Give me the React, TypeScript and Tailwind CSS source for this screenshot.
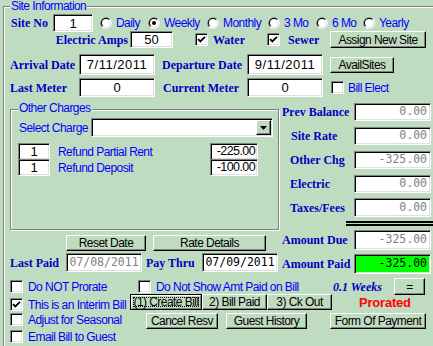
import React from "react";

const SANS = "font-['Liberation_Sans',Arial,sans-serif]";
const SERIF = "font-['Liberation_Serif','Times_New_Roman',serif]";
const MONO = "font-['DejaVu_Sans_Mono',monospace]";
const sunken =
  "border border-t-[#808080] border-l-[#808080] border-r-white border-b-white shadow-[inset_1px_1px_0_#000,inset_-1px_-1px_0_#dfdfdf] bg-white";
const raised =
  "border border-t-white border-l-white border-r-black border-b-black shadow-[inset_-1px_-1px_0_#808080] bg-[#C0DCC0]";

type P = { children?: React.ReactNode; className?: string };

function BL({ children, className = "" }: P) {
  return (
    <span
      className={`${SERIF} font-bold text-[12px] tracking-normal text-[#0000C0] leading-none whitespace-nowrap ${className}`}
    >
      {children}
    </span>
  );
}

function Field({ children, className = "" }: P) {
  return (
    <div className={`${sunken} shrink-0 flex items-center leading-none whitespace-nowrap ${className}`}>
      {children}
    </div>
  );
}

function Btn({ children, className = "" }: P) {
  return (
    <div
      className={`${raised} shrink-0 flex items-center justify-center text-black leading-none whitespace-nowrap ${className}`}
    >
      {children}
    </div>
  );
}

function Radio({ checked }: { checked?: boolean }) {
  return (
    <svg width="12" height="12" viewBox="0 0 12 12" className="shrink-0 block">
      <path d="M1.76 10.24A6 6 0 0 1 10.24 1.76Z" fill="#808080" />
      <path d="M10.24 1.76A6 6 0 0 1 1.76 10.24Z" fill="#ffffff" />
      <path d="M2.46 9.54A5 5 0 0 1 9.54 2.46Z" fill="#000000" />
      <path d="M9.54 2.46A5 5 0 0 1 2.46 9.54Z" fill="#dfdfdf" />
      <circle cx="6" cy="6" r="4" fill="#ffffff" />
      {checked && <circle cx="6" cy="6" r="2" fill="#000000" />}
    </svg>
  );
}

function Check({ checked }: { checked?: boolean }) {
  return (
    <div className={`${sunken} w-[13px] h-[13px] shrink-0 flex items-center justify-center`}>
      {checked && (
        <svg width="9" height="9" viewBox="0 0 9 9" className="block">
          <path d="M1 4.2L3.3 6.5L8 1.8" fill="none" stroke="#000" strokeWidth="1.8" />
        </svg>
      )}
    </div>
  );
}

function RadioItem({ label, checked, className = "" }: { label: string; checked?: boolean; className?: string }) {
  return (
    <div className={`flex items-center gap-[4px] shrink-0 ${className}`}>
      <Radio checked={checked} />
      <span className="leading-none whitespace-nowrap">{label}</span>
    </div>
  );
}

function CbRow({ label, checked, className = "" }: { label: string; checked?: boolean; className?: string }) {
  return (
    <div className={`flex items-center h-[13px] ml-[5px] ${className}`}>
      <Check checked={checked} />
      <span className="ml-[5px] leading-none whitespace-nowrap">{label}</span>
    </div>
  );
}

const numBox = `w-[77px] justify-end pr-[3px] ${MONO} text-[11.5px] tracking-normal`;

export default function App() {
  return (
    <div
      className={`w-[433px] h-[346px] overflow-hidden bg-[#C0DCC0] ${SANS} text-[12px] tracking-[-0.55px] text-[#0000FF]`}
    >
      <div className="relative ml-[3px] mt-[6px] h-[400px] border-l border-t border-[#808080] shadow-[inset_1px_1px_0_#fff] pl-[1px] pt-[1px]">
        <span className="absolute left-[6px] top-[-7px] px-[1px] bg-[#C0DCC0] leading-[12px] whitespace-nowrap">
          Site Information
        </span>

        {/* Row 1 */}
        <div className="mt-[6px] h-[18px] flex items-center">
          <div className="ml-[6px] w-[42px] shrink-0">
            <BL>Site No</BL>
          </div>
          <Field className="w-[40px] h-[18px] justify-center text-[13px] tracking-normal text-black">1</Field>
          <div className="ml-[7px] flex items-center">
            <RadioItem className="w-[48px]" label="Daily" />
            <RadioItem className="w-[59px]" label="Weekly" checked />
            <RadioItem className="w-[61px]" label="Monthly" />
            <RadioItem className="w-[48px]" label="3 Mo" />
            <RadioItem className="w-[47px]" label="6 Mo" />
            <RadioItem label="Yearly" />
          </div>
        </div>

        {/* Row 2 */}
        <div className="mt-[-1px] h-[17px] flex items-center">
          <div className="w-[123px] shrink-0 text-right">
            <BL>Electric Amps</BL>
          </div>
          <Field className="ml-[2px] w-[43px] h-[17px] justify-center text-[13px] tracking-normal text-black">50</Field>
          <div className="ml-[22px]">
            <Check checked />
          </div>
          <div className="ml-[5px] w-[54px] shrink-0">
            <BL>Water</BL>
          </div>
          <Check checked />
          <div className="ml-[8px] w-[42px] shrink-0">
            <BL>Sewer</BL>
          </div>
          <Btn className="w-[96px] h-[17px]">Assign New Site</Btn>
        </div>

        {/* Row 3 */}
        <div className="mt-[6px] h-[21px] flex items-center">
          <div className="ml-[5px] w-[69px] shrink-0">
            <BL>Arrival Date</BL>
          </div>
          <Field className="w-[76px] h-[21px] justify-center text-[13px] tracking-[0.5px] text-black">7/11/2011</Field>
          <div className="ml-[7px] w-[85px] shrink-0">
            <BL>Departure Date</BL>
          </div>
          <Field className="w-[76px] h-[21px] justify-center text-[13px] tracking-[0.5px] text-black">9/11/2011</Field>
          <Btn className="ml-[7px] w-[64px] h-[16px]">AvailSites</Btn>
        </div>

        {/* Row 4 */}
        <div className="mt-[3px] h-[19px] flex items-center">
          <div className="ml-[5px] w-[69px] shrink-0">
            <BL>Last Meter</BL>
          </div>
          <Field className="w-[76px] h-[19px] justify-center text-[13px] tracking-normal text-black">0</Field>
          <div className="ml-[8px] w-[84px] shrink-0">
            <BL>Current Meter</BL>
          </div>
          <Field className="w-[76px] h-[19px] justify-center text-[13px] tracking-normal text-black">0</Field>
          <div className="ml-[8px]">
            <Check />
          </div>
          <span className="ml-[4px] leading-none whitespace-nowrap">Bill Elect</span>
        </div>

        {/* Middle */}
        <div className="flex">
          <div className="w-[277px] shrink-0">
            <div className="relative mt-[12px] ml-[5px] w-[269px] h-[121px] border border-[#808080] shadow-[inset_1px_1px_0_#fff,1px_1px_0_#fff]">
              <span className="absolute left-[7px] top-[-8px] px-[1px] bg-[#C0DCC0] leading-[13px] whitespace-nowrap">
                Other Charges
              </span>
              <div className="mt-[8px] h-[19px] flex items-center">
                <div className="ml-[8px] w-[72px] shrink-0 leading-none whitespace-nowrap">Select Charge</div>
                <div className={`${sunken} w-[182px] h-[19px] shrink-0 flex justify-end p-[1px]`}>
                  <div className={`${raised} w-[15px] flex items-center justify-center`}>
                    <svg width="7" height="4" viewBox="0 0 7 4" className="block">
                      <path d="M0 0H7L3.5 4Z" fill="#000" />
                    </svg>
                  </div>
                </div>
              </div>
              <div className="mt-[6px] h-[17px] flex items-center">
                <Field className="ml-[7px] w-[32px] h-[17px] justify-center text-[13px] tracking-normal text-black">1</Field>
                <div className="ml-[8px] w-[152px] shrink-0 leading-none whitespace-nowrap">Refund Partial Rent</div>
                <Field className="w-[48px] h-[17px] justify-end pr-[2px] text-[12.5px] tracking-[-0.6px] text-black">-225.00</Field>
              </div>
              <div className="mt-[-1px] h-[17px] flex items-center">
                <Field className="ml-[7px] w-[32px] h-[17px] justify-center text-[13px] tracking-normal text-black">1</Field>
                <div className="ml-[8px] w-[152px] shrink-0 leading-none whitespace-nowrap">Refund Deposit</div>
                <Field className="w-[48px] h-[17px] justify-end pr-[2px] text-[12.5px] tracking-[-0.6px] text-black">-100.00</Field>
              </div>
            </div>

            <div className="mt-[5px] h-[16px] flex">
              <Btn className="ml-[61px] w-[80px] h-[16px]">Reset Date</Btn>
              <Btn className="ml-[7px] w-[113px] h-[16px]">Rate Details</Btn>
            </div>

            <div className="mt-[2px] h-[19px] flex items-center">
              <div className="ml-[5px] w-[56px] shrink-0">
                <BL>Last Paid</BL>
              </div>
              <Field className={`w-[76px] h-[19px] justify-center ${MONO} text-[11.5px] tracking-normal text-[#808080]`}>
                07/08/2011
              </Field>
              <div className="ml-[4px] w-[56px] shrink-0">
                <BL>Pay Thru</BL>
              </div>
              <Field className={`w-[76px] h-[19px] justify-center ${MONO} text-[11.5px] tracking-normal text-black`}>
                07/09/2011
              </Field>
            </div>
          </div>

          <div className="flex-1">
            <div className="mt-[6px] h-[18px] flex items-center">
              <div className="w-[72px] shrink-0">
                <BL>Prev Balance</BL>
              </div>
              <Field className={`${numBox} h-[18px] text-[#808080]`}>0.00</Field>
            </div>
            <div className="mt-[6px] h-[18px] flex items-center">
              <div className="w-[72px] shrink-0 pl-[9px]">
                <BL>Site Rate</BL>
              </div>
              <Field className={`${numBox} h-[18px] text-[#808080]`}>0.00</Field>
            </div>
            <div className="mt-[6px] h-[18px] flex items-center">
              <div className="w-[72px] shrink-0 pl-[8px]">
                <BL>Other Chg</BL>
              </div>
              <Field className={`${numBox} h-[18px] text-[#808080]`}>-325.00</Field>
            </div>
            <div className="mt-[6px] h-[18px] flex items-center">
              <div className="w-[72px] shrink-0 pl-[8px]">
                <BL>Electric</BL>
              </div>
              <Field className={`${numBox} h-[18px] text-[#808080]`}>0.00</Field>
            </div>
            <div className="mt-[5px] h-[19px] flex items-center">
              <div className="w-[72px] shrink-0 pl-[8px]">
                <BL>Taxes/Fees</BL>
              </div>
              <Field className={`${numBox} h-[19px] text-[#808080]`}>0.00</Field>
            </div>
            <div className="ml-[64px] mt-[4px] h-[5px] border-t-2 border-b-2 border-black" />
            <div className="mt-[4px] h-[20px] flex items-center">
              <div className="w-[72px] shrink-0">
                <BL>Amount Due</BL>
              </div>
              <Field className={`${numBox} h-[20px] text-[#808080]`}>-325.00</Field>
            </div>
            <div className="mt-[4px] h-[20px] flex items-center">
              <div className="w-[72px] shrink-0">
                <BL>Amount Paid</BL>
              </div>
              <Field className={`${numBox} h-[20px] text-black !bg-[#00FF00]`}>-325.00</Field>
            </div>
          </div>
        </div>

        {/* Bottom */}
        <div className="flex">
          <div className="w-[125px] shrink-0 flex flex-col">
            <CbRow className="mt-[6px]" label="Do NOT Prorate" />
            <CbRow className="mt-[5px]" checked label="This is an Interim Bill" />
            <CbRow className="mt-[2px]" label="Adjust for Seasonal" />
            <CbRow className="mt-[4px]" label="Email Bill to Guest" />
          </div>
          <div className="flex-1">
            <div className="mt-[4px] h-[17px] flex items-center">
              <div className="ml-[8px]">
                <Check />
              </div>
              <div className="ml-[5px] w-[177px] shrink-0 leading-none whitespace-nowrap">Do Not Show Amt Paid on Bill</div>
              <div className="w-[61px] shrink-0">
                <BL className="italic">0.1 Weeks</BL>
              </div>
              <Btn className="w-[31px] h-[17px]">=</Btn>
            </div>
            <div className="mt-[-1px] h-[16px] flex items-center">
              <div className="w-[72px] h-[16px] shrink-0 border border-black">
                <div className="h-full border border-t-white border-l-white border-r-[#808080] border-b-[#808080] bg-[#C0DCC0] p-[1px]">
                  <div className="h-full border border-dotted border-black flex items-center justify-center text-black leading-none whitespace-nowrap">
                    (1) Create Bill
                  </div>
                </div>
              </div>
              <Btn className="w-[65px] h-[16px]">2) Bill Paid</Btn>
              <Btn className="w-[65px] h-[16px]">3) Ck Out</Btn>
              <span className="ml-[27px] font-bold text-[#FF0000] text-[13px] tracking-[-0.2px] leading-none whitespace-nowrap">
                Prorated
              </span>
            </div>
            <div className="mt-[3px] h-[16px] flex items-center">
              <Btn className="ml-[16px] w-[72px] h-[16px]">Cancel Resv</Btn>
              <Btn className="ml-[8px] w-[81px] h-[16px]">Guest History</Btn>
              <Btn className="ml-[23px] w-[96px] h-[16px]">Form Of Payment</Btn>
            </div>
          </div>
        </div>
      </div>
    </div>
  );
}
